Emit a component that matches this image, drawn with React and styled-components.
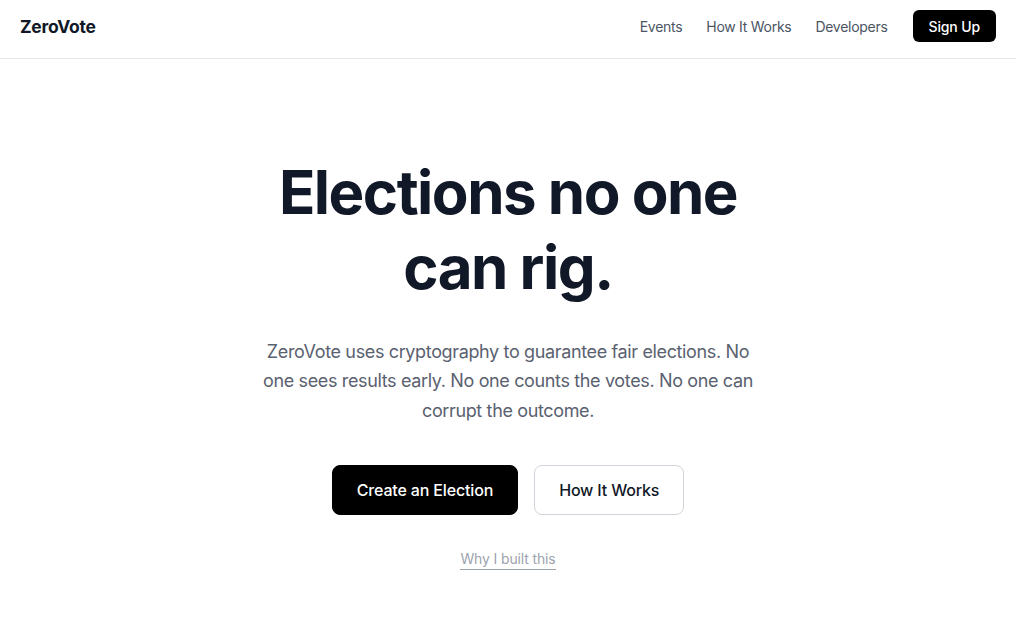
import React from "react";
import styled, { createGlobalStyle } from "styled-components";

const Global = createGlobalStyle`
  html, body { margin: 0; padding: 0; background: #fff; }
  body { font-family: Inter, "Noto Sans", sans-serif; color: #111827; -webkit-font-smoothing: antialiased; }
  * { box-sizing: border-box; }
`;

const Header = styled.header`
  height: 59px;
  border-bottom: 1px solid #e5e7eb;
  display: flex;
  align-items: center;
  justify-content: space-between;
  padding: 0 20px 6px;
`;

const Logo = styled.div`
  font-size: 17.5px;
  font-weight: 700;
  letter-spacing: -0.015em;
  color: #111827;
`;

const Nav = styled.nav`
  display: flex;
  align-items: center;
  gap: 24px;
`;

const NavLink = styled.a`
  font-size: 14px;
  letter-spacing: -0.02em;
  color: #4b5563;
  text-decoration: none;
`;

const SignUp = styled.button`
  height: 32px;
  padding: 0 16px;
  background: #000;
  color: #fff;
  border: none;
  border-radius: 6px;
  font-family: inherit;
  font-size: 14px;
  font-weight: 500;
  letter-spacing: -0.01em;
  margin-left: 1px;
`;

const Hero = styled.main`
  display: flex;
  flex-direction: column;
  align-items: center;
  text-align: center;
  padding-top: 96px;
`;

const Title = styled.h1`
  margin: 0;
  font-size: 60px;
  line-height: 75px;
  font-weight: 700;
  letter-spacing: -0.025em;
  color: #111827;
  max-width: 520px;
`;

const Lead = styled.p`
  margin: 32px 0 0;
  max-width: 500px;
  font-size: 18px;
  line-height: 29.25px;
  letter-spacing: -0.02em;
  color: #5a6170;
`;

const Actions = styled.div`
  display: flex;
  gap: 16px;
  margin-top: 40px;
`;

const Button = styled.button`
  height: 50px;
  padding: 0 24px;
  border-radius: 8px;
  font-family: inherit;
  font-size: 16px;
  font-weight: 500;
  letter-spacing: -0.01em;
  background: ${p => (p.$primary ? "#000" : "#fff")};
  color: ${p => (p.$primary ? "#fff" : "#111827")};
  border: 1px solid ${p => (p.$primary ? "#000" : "#d1d5db")};
`;

const WhyLink = styled.a`
  display: inline-block;
  margin-top: 35px;
  font-size: 14px;
  line-height: 17px;
  letter-spacing: -0.01em;
  color: #9ca3af;
  text-decoration: none;
  padding-bottom: 2px;
  border-bottom: 1px solid #9ca3af;
  cursor: pointer;
`;

export default function App() {
  return (
    <>
      <Global />
      <Header>
        <Logo>ZeroVote</Logo>
        <Nav>
          <NavLink href="#">Events</NavLink>
          <NavLink href="#">How It Works</NavLink>
          <NavLink href="#">Developers</NavLink>
          <SignUp>Sign Up</SignUp>
        </Nav>
      </Header>
      <Hero>
        <Title>Elections no one can rig.</Title>
        <Lead>
          ZeroVote uses cryptography to guarantee fair elections. No one sees
          results early. No one counts the votes. No one can corrupt the outcome.
        </Lead>
        <Actions>
          <Button $primary>Create an Election</Button>
          <Button>How It Works</Button>
        </Actions>
        <WhyLink href="#">Why I built this</WhyLink>
      </Hero>
    </>
  );
}
